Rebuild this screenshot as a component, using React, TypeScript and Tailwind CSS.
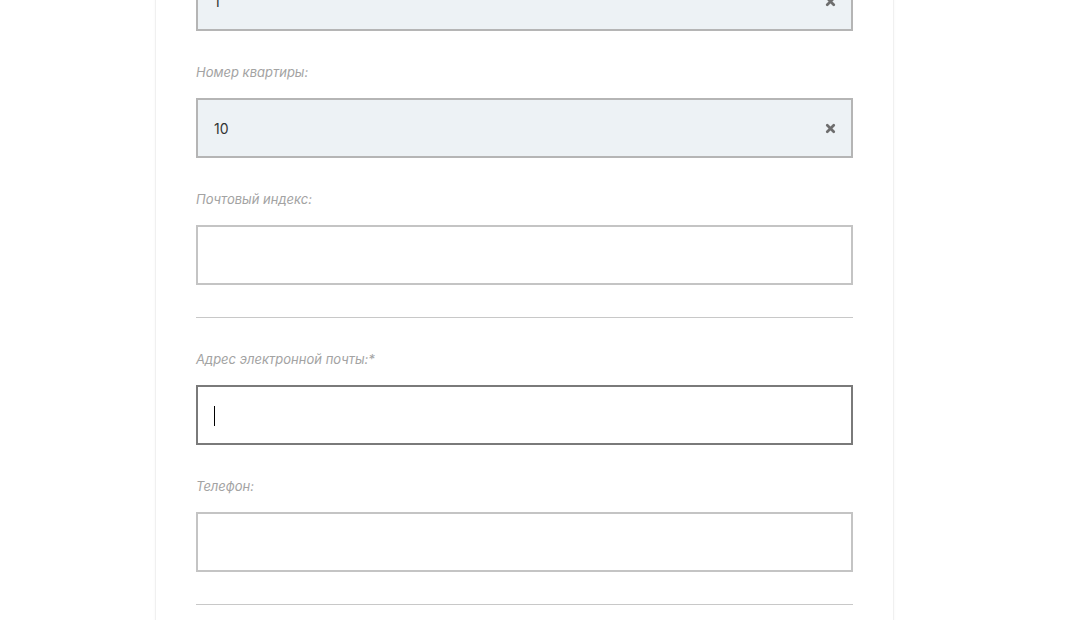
import { X } from "lucide-react"

function Field({ label, value, filled, focused }: { label?: string; value?: string; filled?: boolean; focused?: boolean }) {
    return (
        <div className="mt-[31px]">
            {label && (
                <div className="h-5 leading-5 mb-4 text-[13px] italic text-[#a3a3a3]" style={{ fontFamily: "Inter, 'Noto Sans', sans-serif" }}>
                    {label}
                </div>
            )}
            <div
                className={`h-[60px] border-2 flex items-center pl-4 pr-[14px] ${
                    filled ? "bg-[#edf2f5] border-[#b5b5b5]" : focused ? "bg-white border-[#7a7a7a]" : "bg-white border-[#c4c4c4]"
                }`}
            >
                <span className="flex-1 text-[14px] text-[#333]" style={{ fontFamily: "Inter, 'Noto Sans', sans-serif" }}>
                    {value}
                    {focused && <span className="inline-block w-px h-[20px] bg-black align-middle" />}
                </span>
                {filled && <X size={13} strokeWidth={5} className="text-[#6e6e6e]" />}
            </div>
        </div>
    )
}

export default function App() {
    return (
        <div className="w-full h-[620px] overflow-hidden bg-white">
            <div className="ml-[155px] w-[739px] h-[700px] bg-white border-x border-[#f0f0f0] shadow-[0_0_3px_rgba(0,0,0,0.04)] px-[40px] -mt-[60px]">
                <Field value="1" filled />
                <Field label="Номер квартиры:" value="10" filled />
                <Field label="Почтовый индекс:" />
                <div className="mt-[32px] h-px bg-[#c8c8c8]" />
                <Field label="Адрес электронной почты:*" focused />
                <Field label="Телефон:" />
                <div className="mt-[32px] h-px bg-[#c8c8c8]" />
            </div>
        </div>
    )
}
